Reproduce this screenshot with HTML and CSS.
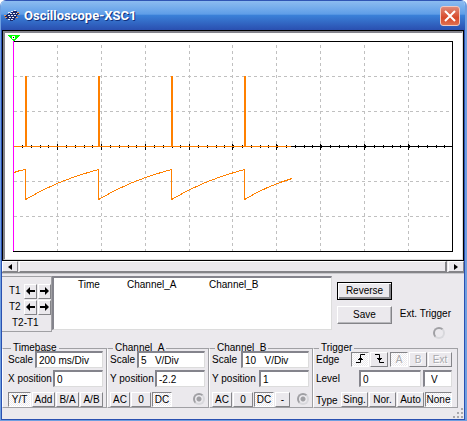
FILE: index.html
```
<!DOCTYPE html>
<html lang="en">
<head>
    <meta charset="UTF-8">
    <meta name="viewport" content="width=device-width, initial-scale=1.0">
    <title>Oscilloscope-XSC1</title>
    <link rel="stylesheet" href="styles.css">
</head>
<body>

<div class="window">
    <!-- Title bar -->
    <header class="titlebar">
        <svg class="app-icon" width="16" height="14" viewBox="0 0 16 14" shape-rendering="crispEdges">
            <path d="M1 6h2V5h2V4h2V3h2V2h4v2h2v2h-2v3h-2v2H9v1H6v-1H4v-1H2V8H1z" fill="#1c2a6c"/>
            <path d="M4 3h2v1H4zM7 2h2v1H7zM10 1h2v1h-2zM6 4h2v1H6zM9 4h2v1H9zM12 4h1v1h-1zM4 6h2v1H4zM7 6h2v1H7zM10 6h2v1h-2zM5 8h2v1H5zM8 8h2v1H8zM4 10h2v1H4zM7 10h2v1H7z" fill="#e4ecf4"/>
            <path d="M0 6h2v1H0zM1 8h2v1H1zM13 3h2v1h-2zM14 5h2v1h-2zM12 8h2v1h-2z" fill="#e09858"/>
        </svg>
        <h1 class="title">Oscilloscope-XSC1</h1>
        <button class="close" type="button" aria-label="Close">
            <svg width="12" height="12" viewBox="0 0 12 12"><path d="M1 1l10 10M11 1L1 11" stroke="#fff" stroke-width="2"/></svg>
        </button>
    </header>

    <main class="client">
        <!-- Scope display -->
        <div class="screen">
            <svg class="scope" viewBox="5 33 457 226" shape-rendering="crispEdges">
                <g class="grid">
                    <path d="M57.5 45V251M101.5 45V251M145.5 45V251M189.5 45V251M232.5 45V251M276.5 45V251M320.5 45V251M364.5 45V251M408.5 45V251"/>
                    <path d="M14 76.5H452M14 111.5H452M14 181.5H452M14 216.5H452"/>
                </g>
                <path class="frame" d="M14 41.5H452.5V251.5H13"/>
                <path class="frame" d="M14 146.5H452"/>
                <path class="ticks" d="M22 146.5H452"/>
                <path class="ticks-major" d="M57.5 144V150M101.5 144V150M145.5 144V150M189.5 144V150M232.5 144V150M276.5 144V150M320.5 144V150M364.5 144V150M408.5 144V150"/>
                <path class="cursor" d="M13.5 41V251"/>
                <path class="pulse" d="M26 76V147M99 76V147M172 76V147M245 76V147"/>
                <path class="wave" d="M14 146.5H291"/>
                <path class="wave" d="M14 172.5L20 170.5L25.5 169.5V199.5Q58 180 98.5 169.5V199.5Q131 180 171.5 169.5V199.5Q204 180 244.5 169.5V199.5Q267 186 292 178.5"/>
                <path d="M7 35H20L13.5 41.5Z" fill="#00ff00"/>
                <path d="M12 36h3v3h-3z" fill="#fff"/>
                <path d="M13 37h1v1h-1z" fill="#000"/>
            </svg>
        </div>

        <div class="scrollbar">
            <button class="scroll-btn" type="button" aria-label="Scroll left">
                <svg width="4" height="6" viewBox="0 0 4 6"><path d="M4 0v6L0 3z"/></svg>
            </button>
            <div class="thumb"></div>
            <button class="scroll-btn" type="button" aria-label="Scroll right">
                <svg width="4" height="6" viewBox="0 0 4 6"><path d="M0 0v6L4 3z"/></svg>
            </button>
        </div>

        <!-- Cursor readout -->
        <section class="readout">
            <div class="cursors">
                <div class="cursor-row">
                    <span>T1</span>
                    <button class="arrow" type="button" aria-label="T1 left"><svg width="9" height="8" viewBox="0 0 9 8"><path d="M4 0v3h5v2H4v3L0 4z"/></svg></button>
                    <button class="arrow" type="button" aria-label="T1 right"><svg width="9" height="8" viewBox="0 0 9 8"><path d="M5 0v3H0v2h5v3l4-4z"/></svg></button>
                </div>
                <div class="cursor-row">
                    <span>T2</span>
                    <button class="arrow" type="button" aria-label="T2 left"><svg width="9" height="8" viewBox="0 0 9 8"><path d="M4 0v3h5v2H4v3L0 4z"/></svg></button>
                    <button class="arrow" type="button" aria-label="T2 right"><svg width="9" height="8" viewBox="0 0 9 8"><path d="M5 0v3H0v2h5v3l4-4z"/></svg></button>
                </div>
                <div class="cursor-diff">T2-T1</div>
            </div>
            <div class="values">
                <table class="values-table">
                    <thead>
                        <tr><th>Time</th><th>Channel_A</th><th>Channel_B</th></tr>
                    </thead>
                </table>
            </div>
            <div class="actions">
                <button class="btn wide default" type="button">Reverse</button>
                <button class="btn wide" type="button">Save</button>
            </div>
            <div class="ext">
                <label for="ext-trigger">Ext. Trigger</label>
                <input class="jack" type="radio" id="ext-trigger">
            </div>
        </section>

        <!-- Settings -->
        <section class="settings">
            <fieldset class="group timebase">
                <legend>Timebase</legend>
                <div class="row first">
                    <label for="tb-scale">Scale</label>
                    <input class="field scale" type="text" id="tb-scale" value="200 ms/Div">
                </div>
                <div class="row">
                    <label for="x-pos">X position</label>
                    <input class="field" type="text" id="x-pos" value="0">
                </div>
                <div class="row buttons">
                    <button class="btn pressed" type="button">Y/T</button>
                    <button class="btn" type="button">Add</button>
                    <button class="btn" type="button">B/A</button>
                    <button class="btn" type="button">A/B</button>
                </div>
            </fieldset>

            <fieldset class="group channel">
                <legend>Channel_A</legend>
                <div class="row first">
                    <label for="a-scale">Scale</label>
                    <input class="field scale" type="text" id="a-scale" value="5   V/Div">
                </div>
                <div class="row">
                    <label for="a-pos">Y position</label>
                    <input class="field" type="text" id="a-pos" value="-2.2">
                </div>
                <div class="row buttons">
                    <button class="btn" type="button">AC</button>
                    <button class="btn" type="button">0</button>
                    <button class="btn pressed" type="button">DC</button>
                    <input class="jack on" type="radio" checked aria-label="Channel A input">
                </div>
            </fieldset>

            <fieldset class="group channel">
                <legend>Channel_B</legend>
                <div class="row first">
                    <label for="b-scale">Scale</label>
                    <input class="field scale" type="text" id="b-scale" value="10   V/Div">
                </div>
                <div class="row">
                    <label for="b-pos">Y position</label>
                    <input class="field" type="text" id="b-pos" value="1">
                </div>
                <div class="row buttons">
                    <button class="btn" type="button">AC</button>
                    <button class="btn" type="button">0</button>
                    <button class="btn pressed" type="button">DC</button>
                    <button class="btn small" type="button">-</button>
                    <input class="jack on" type="radio" checked aria-label="Channel B input">
                </div>
            </fieldset>

            <fieldset class="group trigger">
                <legend>Trigger</legend>
                <div class="row first">
                    <span class="row-label">Edge</span>
                    <div class="edge">
                        <button class="btn pressed" type="button" aria-label="Rising edge"><svg width="9" height="9" viewBox="0 0 9 9"><path d="M0 8.5H4.5V.5H9M2 5.5h5M3 4.5h3" fill="none" stroke="#000"/></svg></button>
                        <button class="btn" type="button" aria-label="Falling edge"><svg width="9" height="9" viewBox="0 0 9 9"><path d="M0 .5H4.5V8.5H9M2 4.5h5M3 5.5h3" fill="none" stroke="#000"/></svg></button>
                    </div>
                    <div class="source">
                        <button class="btn pressed" type="button" disabled>A</button>
                        <button class="btn" type="button" disabled>B</button>
                        <button class="btn" type="button" disabled>Ext</button>
                    </div>
                </div>
                <div class="row">
                    <label class="row-label" for="level">Level</label>
                    <input class="field level" type="text" id="level" value="0">
                    <input class="field unit" type="text" value="V" aria-label="Level unit">
                </div>
                <div class="row buttons">
                    <span class="row-label">Type</span>
                    <button class="btn" type="button">Sing.</button>
                    <button class="btn" type="button">Nor.</button>
                    <button class="btn" type="button">Auto</button>
                    <button class="btn pressed" type="button">None</button>
                </div>
            </fieldset>
        </section>

        <footer class="status">
            <svg width="12" height="12" viewBox="0 0 12 12"><path d="M9 1h2v2H9zM5 5h2v2H5zM9 5h2v2H9zM1 9h2v2H1zM5 9h2v2H5zM9 9h2v2H9z" fill="#a8a8ac"/></svg>
        </footer>
    </main>
</div>

</body>
</html>
```
FILE: styles.css
```
* {
    box-sizing: border-box;
}

body {
    margin: 0;
    background-color: #fff;
    font-family: "Liberation Sans", Arial, sans-serif;
    font-size: 10px;
    line-height: 12px;
    color: #000;
}

button, input {
    font: inherit;
    color: inherit;
    margin: 0;
    padding: 0;
    border-radius: 0;
}

.window {
    border: solid #6f9fe0;
    border-width: 0 2px 2px 1px;
    border-radius: 6px 6px 0 0;
    overflow: hidden;
}

/* Title bar */
.titlebar {
    display: flex;
    align-items: center;
    height: 30px;
    padding: 1px 5px 0 3px;
    border-top: 1px solid #2f55b4;
    background: linear-gradient(#8cbcf0, #5f9ee8 45%, #3a80d8 50%, #2a4fb0);
}

.title {
    flex: 1;
    margin: 0 0 0 4px;
    font: bold 13px/16px Roboto, sans-serif;
    color: #fff;
    text-shadow: 1px 1px #10307c;
}

.close {
    display: grid;
    place-items: center;
    width: 20px;
    height: 20px;
    border: 1px solid #f0c8c0;
    border-radius: 3px;
    background: linear-gradient(#e08a78, #d8492a 60%, #e07050);
}

.client {
    background-color: #ebe9ed;
    border: solid #2a50b0;
    border-width: 0 1px 1px;
}

/* Scope display */
.screen {
    border: 1px solid #000;
    background-color: #fff;
}

.scope {
    display: block;
    width: 100%;
    border: 2px solid #84848c;
    border-right: 1px solid #dcdcdc;
    border-bottom: 1px solid #dcdcdc;
}

.grid {
    stroke: #c0c0c0;
    stroke-dasharray: 3 3;
}

.frame {
    fill: none;
    stroke: #000;
}

.ticks {
    stroke: #000;
    stroke-width: 3;
    stroke-dasharray: 1 7.8;
}

.ticks-major {
    stroke: #000;
}

.cursor {
    stroke: #f0f;
}

.pulse {
    stroke: #ff8000;
    stroke-width: 2;
}

.wave {
    fill: none;
    stroke: #ff8000;
}

.scrollbar {
    display: flex;
    height: 12px;
    border-bottom: 1px solid #848488;
}

.scroll-btn {
    display: grid;
    place-items: center;
    width: 16px;
    background-color: #ebe9ed;
    border: 1px solid #fff;
    border-right-color: #848488;
    border-bottom-color: #848488;
}

.thumb {
    flex: 1;
    margin: 0 1px;
    border: 1px solid #fff;
    border-right: 2px solid #848488;
    border-bottom-color: #848488;
}

/* Buttons and fields */
.btn {
    height: 15px;
    background-color: #ebe9ed;
    border: 1px solid #fff;
    border-right-color: #848488;
    border-bottom-color: #848488;
    line-height: 12px;
    text-align: center;
    white-space: nowrap;
}

.btn.pressed {
    background: repeating-conic-gradient(#fff 0 25%, #ebe9ed 0 50%) 0 0 / 2px 2px;
    border-color: #848488 #fff #fff #848488;
}

.btn:disabled {
    color: #a8a8ac;
    text-shadow: 1px 1px #fff;
}

.btn.wide {
    width: 100%;
    height: 18px;
    box-shadow: inset -1px -1px #b8b8bc;
}

.btn.default {
    border-color: #000;
    box-shadow: inset 1px 1px #fff, inset -2px -2px #848488;
}

.field {
    width: 50px;
    height: 17px;
    margin-left: auto;
    padding: 0 2px;
    background-color: #fff;
    border: 2px solid #84848c;
    border-right: 1px solid #dcdcdc;
    border-bottom: 1px solid #dcdcdc;
}

.field.scale {
    width: 68px;
}

.jack {
    appearance: none;
    width: 12px;
    height: 12px;
    border: 2px solid #a0a0a4;
    border-right-color: #d8d8dc;
    border-bottom-color: #d8d8dc;
    border-radius: 50%;
}

.jack.on {
    background: radial-gradient(#a0a0a4 2px, transparent 3px);
}

/* Cursor readout */
.readout {
    display: grid;
    grid-template-columns: 50px 280px 60px 1fr;
    padding-top: 2px;
    border-top: 1px solid #c8c8cc;
}

.cursors {
    height: 56px;
    padding: 6px 1px 0 7px;
    border: 1px solid #a0a0a4;
    border-left: 0;
}

.cursor-row {
    display: grid;
    grid-template-columns: 14px 13px 13px;
    gap: 1px;
    align-items: center;
    height: 16px;
}

.cursor-diff {
    margin: 2px 0 0 3px;
}

.arrow {
    display: grid;
    place-items: center;
    height: 15px;
    background-color: #ebe9ed;
    border: 1px solid #fff;
    border-right-color: #848488;
    border-bottom-color: #848488;
}

.values {
    height: 54px;
    padding-top: 1px;
    background-color: #fff;
    border: 2px solid #84848c;
    border-right: 1px solid #dcdcdc;
    border-bottom: 1px solid #dcdcdc;
}

.values-table {
    width: 208px;
    margin-left: 24px;
    border-collapse: collapse;
    table-layout: fixed;
}

.values-table th {
    padding: 0;
    font-weight: normal;
    text-align: left;
}

.values-table th:first-child {
    width: 49px;
}

.values-table th:nth-child(2) {
    width: 82px;
}

.actions {
    display: grid;
    align-content: start;
    gap: 6px;
    padding: 6px 0 0 5px;
}

.ext {
    display: flex;
    flex-direction: column;
    align-items: flex-end;
    gap: 7px;
    padding: 32px 13px 0 0;
}

.ext .jack {
    margin-right: 6px;
}

/* Settings */
.settings {
    display: grid;
    grid-template-columns: 105px 102px 104px 1fr;
    padding: 3px 6px 0 0;
}

.group {
    min-width: 0;
    margin: 0;
    padding: 0 3px 0 2px;
    border: 1px solid #a0a0a4;
    border-left-color: #fff;
}

.timebase {
    padding-left: 5px;
}

.trigger {
    padding-right: 5px;
}

.group legend {
    margin-left: 3px;
    padding: 0 2px;
}

.row {
    display: flex;
    align-items: center;
    height: 19px;
}

.row.first {
    margin-top: -4px;
}

.row.buttons {
    gap: 1px;
    height: 19px;
    align-items: flex-end;
}

.timebase .buttons .btn {
    flex: 1;
}

.channel .btn {
    width: 20px;
}

.channel .btn.small {
    width: 15px;
}

.trigger .buttons .btn {
    width: 27px;
}

.row.buttons .jack {
    margin: 0 0 2px auto;
}

.row-label {
    flex: 1;
}

.edge, .source {
    display: flex;
    gap: 1px;
}

.edge .btn, .source .btn {
    width: 18px;
}

.source {
    margin-left: 2px;
}

.source .btn:last-child {
    width: 24px;
}

.field.level {
    width: 62px;
    margin-right: 2px;
}

.field.unit {
    width: 29px;
    margin-left: 0;
    padding-left: 6px;
}

/* Resize grip */
.status {
    display: flex;
    justify-content: flex-end;
    align-items: flex-end;
    height: 11px;
}
```
